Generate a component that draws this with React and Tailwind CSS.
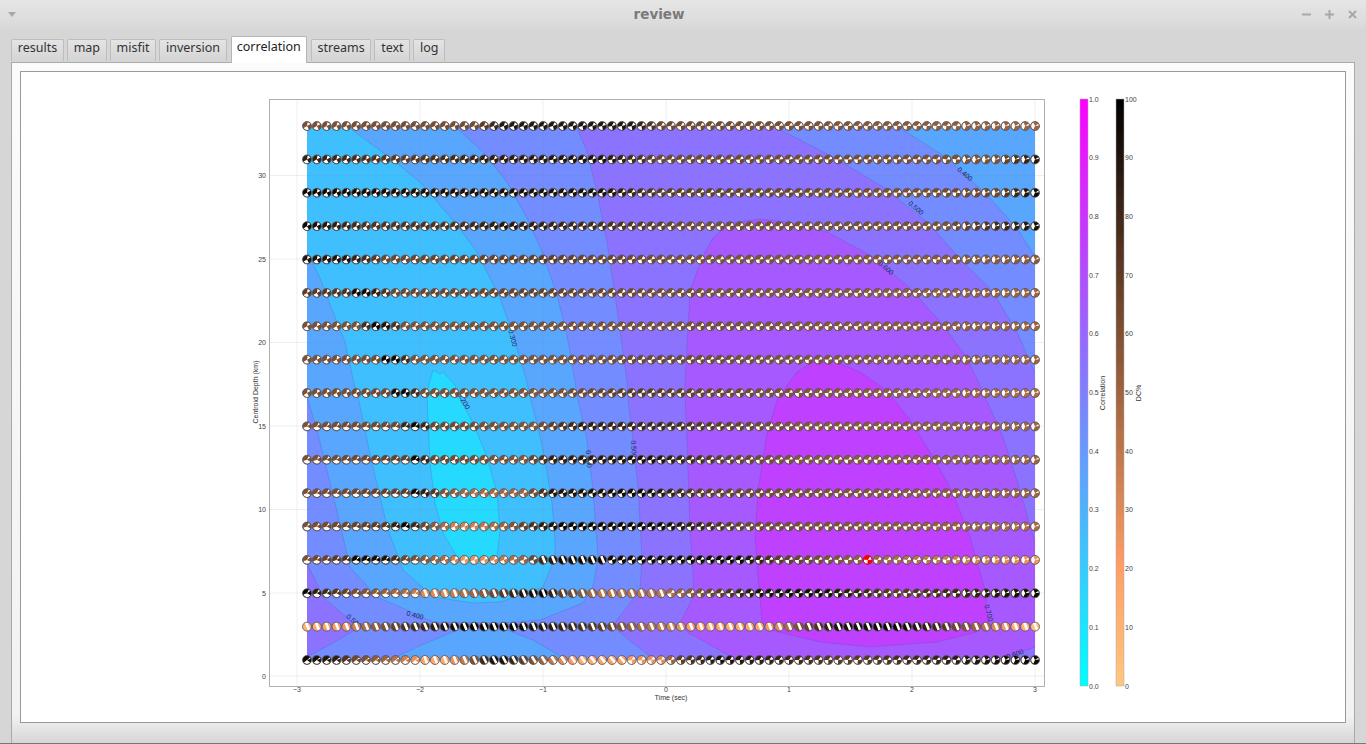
const PLOT = { left: 307, right: 1035, top: 126, bottom: 660 }
const COLS = 75
const STEP_X = (PLOT.right - PLOT.left) / (COLS - 1)
const STEP_Y = (PLOT.bottom - PLOT.top) / 16

const xTicks = [
  { x: 297, label: '−3' },
  { x: 420, label: '−2' },
  { x: 543, label: '−1' },
  { x: 666, label: '0' },
  { x: 789, label: '1' },
  { x: 912, label: '2' },
  { x: 1035, label: '3' },
]
const yTicks = [
  { y: 175.5, label: '30' },
  { y: 259, label: '25' },
  { y: 342.5, label: '20' },
  { y: 426, label: '15' },
  { y: 509.5, label: '10' },
  { y: 593, label: '5' },
  { y: 676, label: '0' },
]

// filled contour bands, painted bottom to top
const bands = [
  { fill: '#738cff', pts: '300,120 577,120 578,130 587,152 597,192 607,242 615,295 622,345 627,382 628,400 633,440 638,487 642,557 640,590 617,620 613,627 633,643 655,660 660,666 300,666 300,660 307,657 333,643 360,627 350,620 323,597 307,563 300,550' },
  { fill: '#59a6ff', pts: '300,120 453,120 457,128 483,152 507,182 527,218 542,252 557,295 567,335 575,382 578,400 587,440 593,490 598,557 593,587 583,603 540,620 500,623 433,622 407,610 377,597 350,567 335,503 317,430 307,397 300,385' },
  { fill: '#59a6ff', pts: '385,666 390,660 417,647 457,630 507,630 533,640 567,660 572,666' },
  { fill: '#40bfff', pts: '300,120 343,120 347,126 397,163 423,185 457,225 477,252 500,298 513,335 527,382 530,397 538,427 545,460 552,503 555,540 555,557 543,587 500,602 473,603 433,597 403,570 388,530 372,463 358,397 355,388 345,342 333,312 320,278 307,252 300,240' },
  { fill: '#26d9ff', pts: '433,370 428,388 427,397 430,463 435,503 443,533 457,557 473,565 497,557 500,530 497,493 487,457 473,423 457,393 455,385 443,372 440,374' },
  { fill: '#738cff', pts: '765,120 777,128 833,157 883,187 927,222 963,262 993,292 1017,332 1035,373 1042,390 1042,120' },
  { fill: '#59a6ff', pts: '895,120 900,128 947,158 987,195 1017,228 1035,257 1042,270 1042,120' },
  { fill: '#a659ff', pts: '685,382 690,292 700,262 713,238 730,223 760,219 787,222 827,232 870,255 910,288 943,325 967,358 983,392 985,397 1003,437 1020,490 1035,543 1042,560 1042,644 1035,647 1007,657 1003,660 1000,666 740,666 737,660 687,632 680,623 693,597 693,573 690,533 687,440 685,397' },
  { fill: '#bf40ff', pts: '782,392 797,372 813,362 837,362 860,372 883,388 892,397 910,420 933,457 953,493 970,537 985,590 988,622 977,632 937,642 870,647 820,642 770,630 762,622 758,577 755,537 758,490 767,433 778,397' },
]

const contourLabels = [
  { x: 965, y: 174, r: 40, t: '0.400' },
  { x: 916, y: 208, r: 40, t: '0.500' },
  { x: 886, y: 268, r: 40, t: '0.600' },
  { x: 513, y: 338, r: 75, t: '0.300' },
  { x: 464, y: 401, r: 60, t: '0.200' },
  { x: 415, y: 615, r: 15, t: '0.400' },
  { x: 354, y: 621, r: 40, t: '0.500' },
  { x: 589, y: 459, r: 85, t: '0.400' },
  { x: 634, y: 449, r: 87, t: '0.500' },
  { x: 989, y: 613, r: 75, t: '0.700' },
  { x: 1015, y: 654, r: -20, t: '0.600' },
]

// DC% along each row, as [column, value] stops, top row first
const dcRows = [
  [[0, 60], [17, 62], [20, 88], [33, 90], [36, 65], [74, 50]],
  [[0, 85], [10, 70], [18, 85], [30, 92], [36, 65], [70, 60], [74, 90]],
  [[0, 95], [12, 92], [30, 92], [36, 70], [60, 60], [70, 65], [74, 97]],
  [[0, 95], [6, 75], [15, 75], [20, 88], [32, 75], [40, 62], [65, 60], [74, 92]],
  [[0, 90], [4, 90], [8, 65], [25, 70], [40, 60], [74, 55]],
  [[0, 70], [4, 75], [5, 95], [6, 95], [9, 65], [25, 68], [40, 60], [74, 50]],
  [[0, 60], [5, 60], [7, 96], [8, 90], [10, 60], [25, 60], [40, 62], [74, 50]],
  [[0, 60], [7, 62], [8, 96], [9, 96], [11, 60], [25, 60], [36, 65], [74, 50]],
  [[0, 60], [8, 65], [9, 96], [10, 96], [12, 62], [24, 58], [34, 72], [50, 58], [74, 45]],
  [[0, 60], [9, 65], [11, 96], [13, 65], [23, 58], [28, 85], [36, 80], [50, 58], [74, 50]],
  [[0, 60], [10, 68], [11, 97], [13, 65], [22, 58], [25, 85], [35, 92], [42, 70], [50, 58], [74, 50]],
  [[0, 60], [10, 70], [11, 97], [14, 60], [17, 45], [22, 50], [25, 90], [34, 96], [40, 70], [50, 60], [74, 50]],
  [[0, 60], [8, 72], [10, 97], [12, 65], [15, 35], [17, 35], [20, 50], [24, 85], [26, 97], [36, 95], [45, 65], [60, 55], [74, 45]],
  [[0, 60], [4, 75], [5, 96], [8, 92], [10, 65], [14, 45], [16, 25], [18, 28], [22, 50], [24, 80], [26, 95], [44, 95], [48, 70], [60, 45], [74, 25]],
  [[0, 97], [1, 85], [5, 62], [10, 45], [12, 30], [14, 30], [18, 55], [22, 90], [24, 97], [26, 70], [28, 55], [30, 40], [36, 40], [42, 70], [46, 92], [52, 95], [60, 70], [68, 85], [74, 97]],
  [[0, 10], [4, 25], [6, 45], [10, 75], [14, 90], [16, 97], [22, 97], [24, 90], [30, 70], [34, 45], [38, 28], [40, 15], [46, 18], [48, 30], [50, 60], [54, 92], [60, 97], [64, 80], [68, 50], [72, 15], [74, 5]],
  [[0, 95], [3, 85], [5, 65], [8, 50], [10, 35], [12, 18], [14, 15], [16, 40], [18, 80], [19.5, 97], [22, 70], [26, 30], [28, 15], [32, 20], [36, 30], [38, 70], [42, 92], [55, 70], [65, 85], [74, 97]],
]

function lerpStops(stops, c) {
  for (let i = 1; i < stops.length; i++) {
    if (c <= stops[i][0]) {
      const [c0, v0] = stops[i - 1]
      const [c1, v1] = stops[i]
      return v0 + ((v1 - v0) * (c - c0)) / (c1 - c0)
    }
  }
  return stops[stops.length - 1][1]
}

// reversed copper map of the DC% colour bar
function copper(dc) {
  const x = 1 - dc / 100
  const r = Math.round(Math.min(1, 1.25 * x) * 255)
  const g = Math.round(0.78 * x * 255)
  const b = Math.round(0.5 * x * 255)
  return `rgb(${r},${g},${b})`
}

const RADIUS = 4.5
const LOBE = 3.9

function wedge(axis, half) {
  const a0 = ((axis - half - 90) * Math.PI) / 180
  const a1 = ((axis + half - 90) * Math.PI) / 180
  const p = a => `${(LOBE * Math.cos(a)).toFixed(2)} ${(LOBE * Math.sin(a)).toFixed(2)}`
  return `M0 0L${p(a0)}A${LOBE} ${LOBE} 0 0 1 ${p(a1)}Z`
}

function isStriped(row, col) {
  if (row === 15) return true
  if (row === 14) return col >= 12 && col <= 36
  if (row === 13) return col >= 24 && col <= 30
  if (row === 16) return col >= 12 && col <= 32
  return false
}

// white lobes on a coloured disc: [axis, half angle] for the big and the small one
function whiteLobes(row, col) {
  if (row === 16 && col < 12) return [[180, 52], [60, 12]]
  if (row >= 9 && col < 12) return [[185, 66], [40, 14]]
  if (col > 66) return [[270, 66], [70, 14]]
  const t = col / (COLS - 1)
  return [[195 + 45 * t, 44], [35 + 35 * t, 26]]
}

function Ball({ row, col }) {
  const cx = PLOT.left + col * STEP_X
  const cy = PLOT.top + row * STEP_Y
  const best = row === 13 && col === 57
  const color = best ? '#ff0000' : copper(lerpStops(dcRows[row], col))
  const place = `translate(${cx.toFixed(2)} ${cy.toFixed(2)})`

  if (isStriped(row, col)) {
    const tilt = row === 16 ? 8 + col : 22
    return (
      <g transform={place}>
        <circle r={RADIUS} fill={color} />
        <rect x="-0.6" y="-4" width="2.6" height="8" fill="#fff" transform={`rotate(${-tilt})`} />
        <circle r={RADIUS} fill="none" stroke="#555" strokeWidth="0.8" />
      </g>
    )
  }

  const [big, small] = whiteLobes(row, col)
  return (
    <g transform={place}>
      <circle r={RADIUS} fill={color} />
      <path d={wedge(big[0], big[1]) + wedge(small[0], small[1])} fill="#fff" />
      <circle r={RADIUS} fill="none" stroke={best ? '#d00' : '#555'} strokeWidth="0.8" />
    </g>
  )
}

function ColorBar({ x, id, ticks, label }) {
  return (
    <g>
      <rect x={x} y="99" width="8" height="587" fill={`url(#${id})`} stroke="#aaa" strokeWidth="0.5" />
      {ticks.map((t, i) => (
        <text key={t} x={x + 9} y={686 - (587 * i) / (ticks.length - 1) + 2.5} fontSize="7" fill="#444">
          {t}
        </text>
      ))}
      <text
        x={x + 25}
        y="393"
        fontSize="7"
        fill="#333"
        textAnchor="middle"
        transform={`rotate(-90 ${x + 25} 393)`}
      >
        {label}
      </text>
    </g>
  )
}

function Chart() {
  const rows = Array.from({ length: 17 }, (_, i) => i)
  const cols = Array.from({ length: COLS }, (_, i) => i)
  return (
    <svg
      width="1324"
      height="650"
      viewBox="21 72 1324 650"
      className="block"
      style={{ fontFamily: '"Liberation Sans", Arial, sans-serif' }}
    >
      <defs>
        <linearGradient id="coolBar" x1="0" y1="1" x2="0" y2="0">
          <stop offset="0" stopColor="#00ffff" />
          <stop offset="1" stopColor="#ff00ff" />
        </linearGradient>
        <linearGradient id="dcBar" x1="0" y1="1" x2="0" y2="0">
          <stop offset="0" stopColor="#ffc77f" />
          <stop offset="0.2" stopColor="#ff9f66" />
          <stop offset="0.5" stopColor="#9f633f" />
          <stop offset="0.8" stopColor="#402819" />
          <stop offset="1" stopColor="#000000" />
        </linearGradient>
        <clipPath id="plotArea">
          <rect x={PLOT.left} y={PLOT.top} width={PLOT.right - PLOT.left} height={PLOT.bottom - PLOT.top} />
        </clipPath>
      </defs>

      <g clipPath="url(#plotArea)">
        <rect x={PLOT.left} y={PLOT.top} width={PLOT.right - PLOT.left} height={PLOT.bottom - PLOT.top} fill="#8c73ff" />
        {bands.map(b => (
          <polygon key={b.pts} points={b.pts} fill={b.fill} stroke="#3a4a9a" strokeOpacity="0.3" strokeWidth="0.7" strokeLinejoin="round" />
        ))}
      </g>

      {/* grid */}
      {xTicks.map(t => (
        <line key={t.x} x1={t.x} x2={t.x} y1="99" y2="686" stroke="#808080" strokeOpacity="0.13" strokeWidth="1" />
      ))}
      {yTicks.map(t => (
        <line key={t.y} x1="269" x2="1044" y1={t.y} y2={t.y} stroke="#808080" strokeOpacity="0.13" strokeWidth="1" />
      ))}

      {contourLabels.map(l => (
        <text
          key={`${l.x}-${l.y}`}
          x={l.x}
          y={l.y + 2.5}
          fontSize="7"
          fill="#1c2560"
          textAnchor="middle"
          transform={`rotate(${l.r} ${l.x} ${l.y})`}
        >
          {l.t}
        </text>
      ))}

      {rows.map(r => cols.map(c => <Ball key={`${r}-${c}`} row={r} col={c} />))}

      <rect x="269.5" y="99.5" width="775" height="587" fill="none" stroke="#b0b0b0" strokeWidth="1" />

      {xTicks.map(t => (
        <text key={t.x} x={t.x} y="692" fontSize="7" fill="#444" textAnchor="middle">
          {t.label}
        </text>
      ))}
      {yTicks.map(t => (
        <text key={t.y} x="266" y={t.y + 2.5} fontSize="7" fill="#444" textAnchor="end">
          {t.label}
        </text>
      ))}
      <text x="671" y="700" fontSize="7" fill="#333" textAnchor="middle">
        Time (sec)
      </text>
      <text x="258" y="392" fontSize="7" fill="#333" textAnchor="middle" transform="rotate(-90 258 392)">
        Centroid Depth (km)
      </text>

      <ColorBar
        x={1080}
        id="coolBar"
        label="Correlation"
        ticks={['0.0', '0.1', '0.2', '0.3', '0.4', '0.5', '0.6', '0.7', '0.8', '0.9', '1.0']}
      />
      <ColorBar
        x={1116}
        id="dcBar"
        label="DC%"
        ticks={['0', '10', '20', '30', '40', '50', '60', '70', '80', '90', '100']}
      />
    </svg>
  )
}

const tabs = ['results', 'map', 'misfit', 'inversion', 'correlation', 'streams', 'text', 'log']

function Tab({ label }) {
  if (label === 'correlation') {
    return (
      <div className="z-10 -mb-px mx-px h-[27px] rounded-t-[2px] border border-b-0 border-[#b5b5b5] bg-white px-[5px] pt-px leading-[18px] text-[#222]">
        {label}
      </div>
    )
  }
  return (
    <div className="mb-px h-[22px] rounded-t-[2px] border border-b-0 border-[#bdbdbd] bg-linear-to-b from-[#e4e4e4] to-[#d4d4d4] px-[5.75px] leading-[16px] text-[#333]">
      {label}
    </div>
  )
}

export default function App() {
  return (
    <div className="flex h-[744px] w-[1366px] flex-col overflow-hidden border-b border-[#777] bg-[#d6d6d6]">
      {/* title bar */}
      <div className="flex h-[28px] shrink-0 items-center justify-between bg-linear-to-b from-[#e6e6e6] to-[#d9d9d9] px-[8px]">
        <svg width="8" height="5" viewBox="0 0 8 5" className="mt-px">
          <path d="M0 0h8L4 5z" fill="#a8a8a8" />
        </svg>
        <span className="text-[13.5px] font-bold text-[#7a7a7a] [font-family:'DejaVu_Sans',sans-serif]">review</span>
        <div className="flex items-center gap-[14px] pr-[1px] text-[#a8a8a8]">
          <svg width="9" height="9" viewBox="0 0 9 9">
            <path d="M0 4.5h9" stroke="currentColor" strokeWidth="2" />
          </svg>
          <svg width="9" height="9" viewBox="0 0 9 9">
            <path d="M0 4.5h9M4.5 0v9" stroke="currentColor" strokeWidth="2" />
          </svg>
          <svg width="9" height="9" viewBox="0 0 9 9">
            <path d="M1 1l7 7M8 1l-7 7" stroke="currentColor" strokeWidth="2" />
          </svg>
        </div>
      </div>

      {/* tab strip */}
      <div className="flex h-[34px] shrink-0 items-end gap-[3px] pl-[11px] text-[12.5px] [font-family:'Noto_Sans',sans-serif]">
        {tabs.map(t => (
          <Tab key={t} label={t} />
        ))}
      </div>

      {/* tab pane */}
      <div className="mx-[11px] flex-1 border border-b-0 border-[#aaa] bg-linear-to-b from-[#fbfbfb] via-[#f2f2f2] via-[96%] to-[#d6d6d6] pt-[8px] pl-[8px] pr-[8px]">
        <div className="border border-[#999] bg-white">
          <Chart />
        </div>
      </div>
    </div>
  )
}
